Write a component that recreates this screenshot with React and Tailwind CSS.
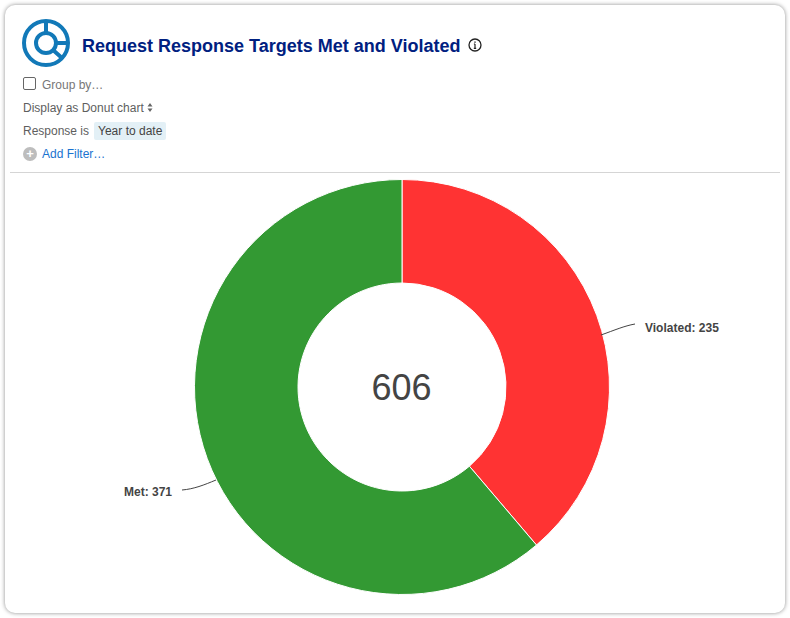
import React from 'react';

const polar = (cx, cy, r, deg) => {
  const a = (deg - 90) * Math.PI / 180;
  return [cx + r * Math.cos(a), cy + r * Math.sin(a)];
};

function slicePath(cx, cy, outer, inner, from, to) {
  const [x1, y1] = polar(cx, cy, outer, from);
  const [x2, y2] = polar(cx, cy, outer, to);
  const [x3, y3] = polar(cx, cy, inner, to);
  const [x4, y4] = polar(cx, cy, inner, from);
  const large = to - from > 180 ? 1 : 0;
  return `M${x1} ${y1}A${outer} ${outer} 0 ${large} 1 ${x2} ${y2}L${x3} ${y3}A${inner} ${inner} 0 ${large} 0 ${x4} ${y4}Z`;
}

function ReportIcon() {
  return (
    <svg width="48" height="48" viewBox="0 0 48 48" fill="none" stroke="#1279b8" className="shrink-0">
      <circle cx="24" cy="24" r="22" strokeWidth="4" />
      <circle cx="24" cy="24" r="10" strokeWidth="4" />
      <path d="M24 2v12M34 24h12M31 31l9 8" strokeWidth="4" />
    </svg>
  );
}

function InfoIcon() {
  return (
    <svg width="14" height="14" viewBox="0 0 14 14" fill="none" stroke="#222" className="block">
      <circle cx="7" cy="7" r="6" strokeWidth="1.3" />
      <path d="M7 6v4.2M5.8 10.4h2.4M5.9 6h1.1" strokeWidth="1.2" />
      <path d="M7 3.4v1.3" strokeWidth="1.4" />
    </svg>
  );
}

function DonutChart() {
  const total = 606;
  const violatedEnd = (235 / total) * 360;
  const cx = 392;
  const cy = 214;
  return (
    <svg width="770" height="440" viewBox="0 0 770 440" className="block">
      <path d={slicePath(cx, cy, 207.5, 104, 0, violatedEnd)} fill="#ff3333" stroke="#fff" strokeWidth="1" />
      <path d={slicePath(cx, cy, 207.5, 104, violatedEnd, 360)} fill="#339933" stroke="#fff" strokeWidth="1" />
      <path d="M591 162C605 157 614 153 625 151" fill="none" stroke="#444" strokeWidth="1" />
      <path d="M172 317C184 316 194 312 206 307" fill="none" stroke="#444" strokeWidth="1" />
      <text x="635" y="159" fontSize="12" fontWeight="700" fill="#444" fontFamily="Liberation Sans, Arial, sans-serif">Violated: 235</text>
      <text x="114" y="323" fontSize="12" fontWeight="700" fill="#444" fontFamily="Liberation Sans, Arial, sans-serif">Met: 371</text>
      <text x={cx - 0.5} y="227" fontSize="36" textAnchor="middle" fill="#444" fontFamily="Liberation Sans, Arial, sans-serif">606</text>
    </svg>
  );
}

export default function App() {
  return (
    <div className="w-[790px] h-[618px] bg-white p-[5px] overflow-hidden font-['Liberation_Sans',Arial,sans-serif]">
      <div className="h-[608px] w-[780px] rounded-[10px] bg-white shadow-[0_0_4px_rgba(0,0,0,0.45)] px-[5px] overflow-hidden">
        <div className="border-b border-[#d5d5d5] pl-[12px] pt-[14px] h-[168px]">
          <div className="flex items-center h-[48px]">
            <ReportIcon />
            <h1 className="ml-[12px] mt-[6px] text-[18px] font-bold text-[#002080] whitespace-nowrap">
              Request Response Targets Met and Violated
            </h1>
            <span className="ml-[8px] mt-[3px]"><InfoIcon /></span>
          </div>
          <div className="text-[12px] text-[#5e5e5e]">
            <div className="flex items-center h-[23px] mt-[6px]">
              <span className="w-[13px] h-[13px] rounded-[2px] border-[1.5px] border-[#666] mb-[3px] ml-[1px] bg-white" />
              <span className="ml-[6px] text-[#777]">Group by…</span>
            </div>
            <div className="flex items-center h-[23px]">
              <span className="ml-[1px]">Display as Donut chart</span>
              <svg width="6" height="9" viewBox="0 0 6 9" className="ml-[3px]" fill="#666">
                <path d="M3 0l2.5 3.4h-5zM3 9L.5 5.6h5z" />
              </svg>
            </div>
            <div className="flex items-center h-[23px]">
              <span className="ml-[1px]">Response is</span>
              <span className="ml-[5px] bg-[#e3f0f6] text-[#444] px-[4px] h-[18px] leading-[18px] rounded-[2px]">Year to date</span>
            </div>
            <div className="flex items-center h-[23px]">
              <span className="ml-[1px] w-[14px] h-[14px] rounded-full bg-[#bdbdbd] text-white flex items-center justify-center text-[13px] font-bold leading-none">+</span>
              <span className="ml-[5px] text-[#1a73d0]">Add Filter…</span>
            </div>
          </div>
        </div>
        <DonutChart />
      </div>
    </div>
  );
}
